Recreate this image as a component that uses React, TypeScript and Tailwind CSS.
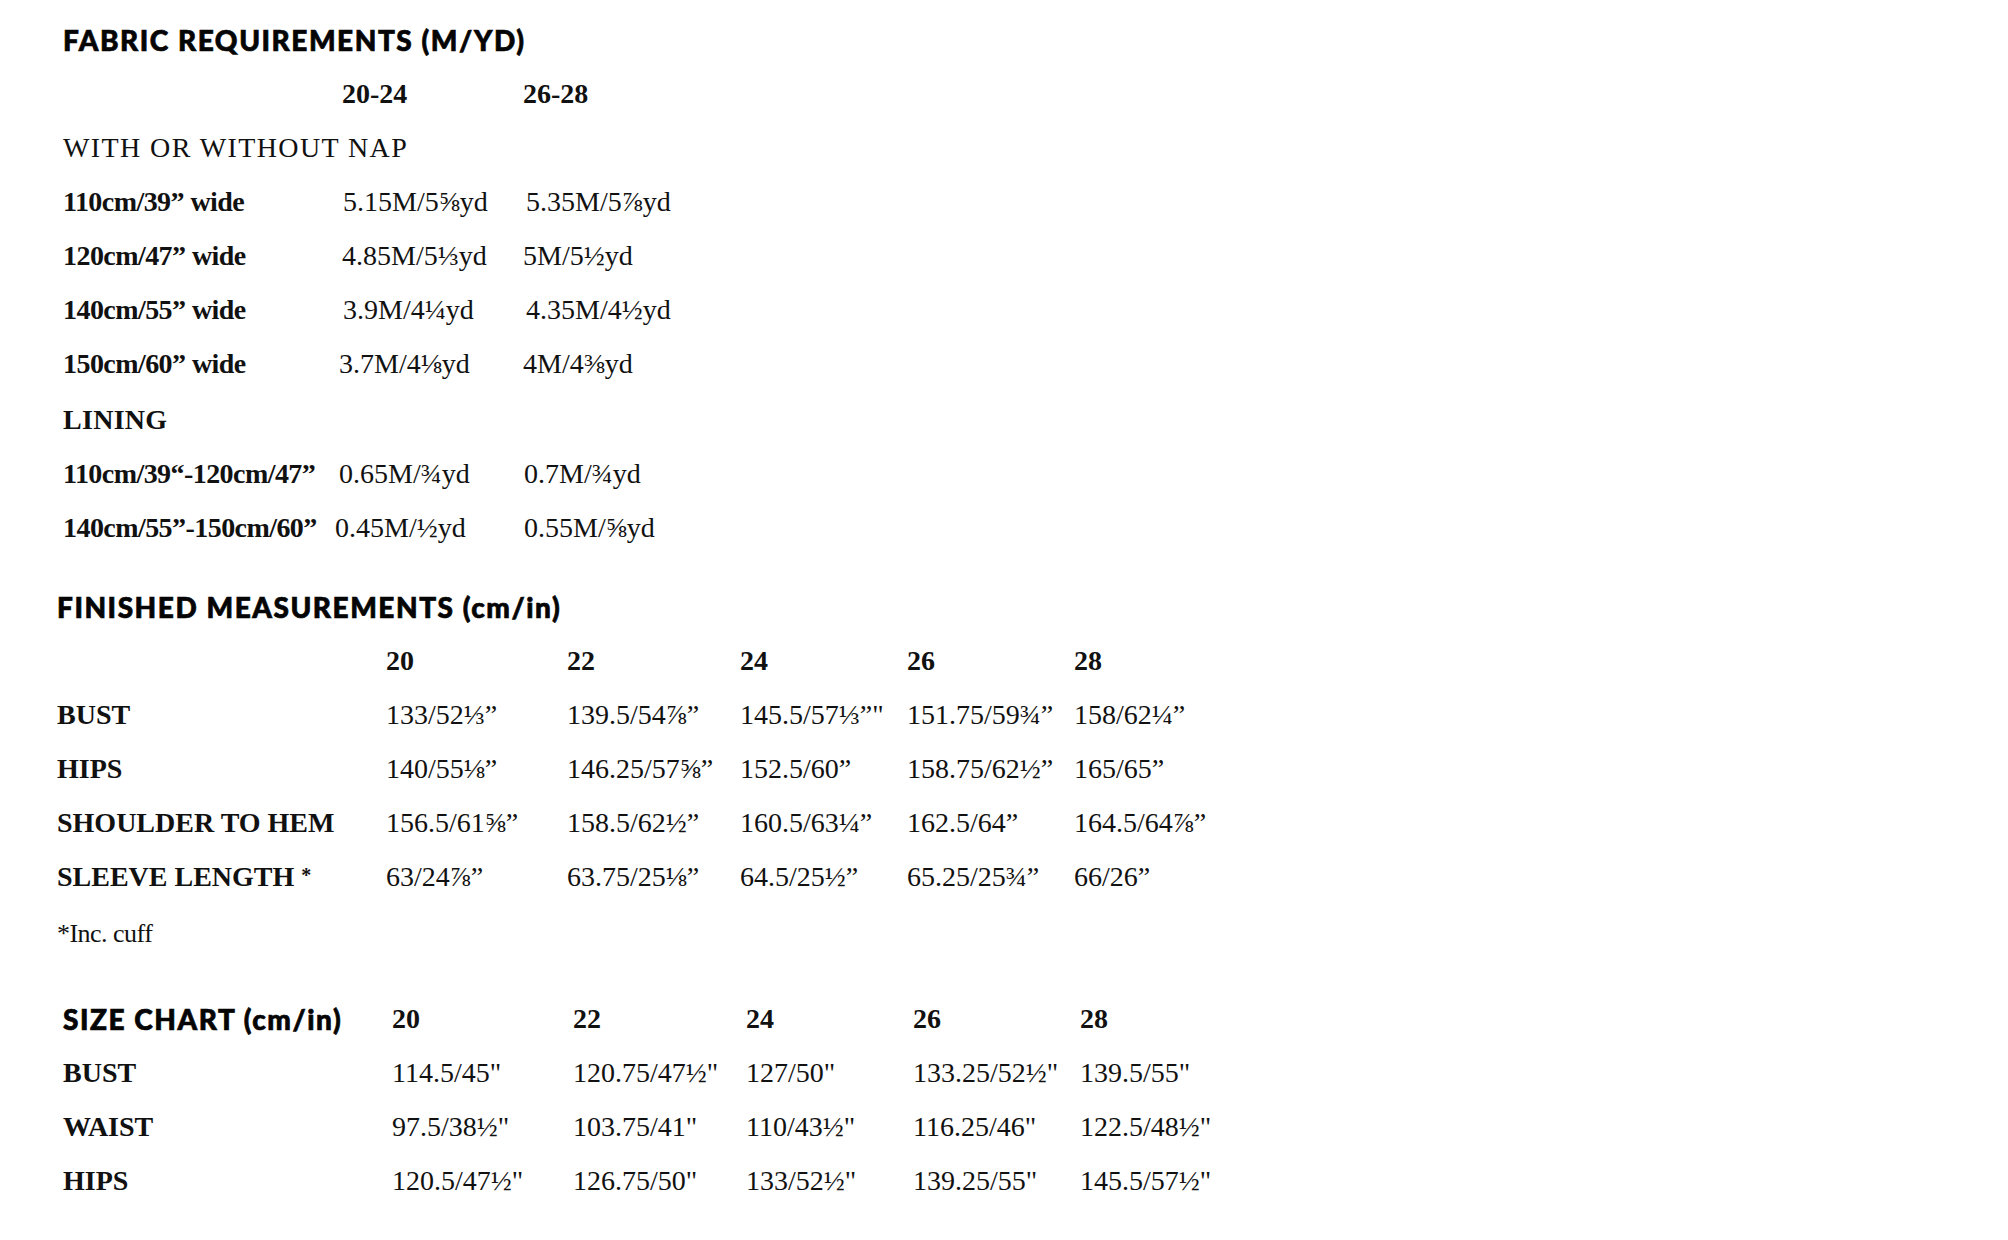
import React from "react";

type Cell = { t: string; c?: string };

const fabricRows: { label: string; v: Cell[] }[] = [
  { label: "110cm/39” wide", v: [{ t: "5.15M/5⅝yd", c: "ml-[1px]" }, { t: "5.35M/5⅞yd", c: "ml-[3px]" }] },
  { label: "120cm/47” wide", v: [{ t: "4.85M/5⅓yd" }, { t: "5M/5½yd" }] },
  { label: "140cm/55” wide", v: [{ t: "3.9M/4¼yd", c: "ml-[1px]" }, { t: "4.35M/4½yd", c: "ml-[3px]" }] },
  { label: "150cm/60” wide", v: [{ t: "3.7M/4⅛yd", c: "-ml-[3px]" }, { t: "4M/4⅜yd" }] },
];

const liningRows: { label: string; v: Cell[] }[] = [
  { label: "110cm/39“-120cm/47”", v: [{ t: "0.65M/¾yd", c: "-ml-[3px]" }, { t: "0.7M/¾yd", c: "ml-[1px]" }] },
  { label: "140cm/55”-150cm/60”", v: [{ t: "0.45M/½yd", c: "-ml-[7px]" }, { t: "0.55M/⅝yd", c: "ml-[1px]" }] },
];

const sizes = ["20", "22", "24", "26", "28"];

const finished: { label: React.ReactNode; v: string[] }[] = [
  { label: "BUST", v: ["133/52⅓”", "139.5/54⅞”", "145.5/57⅓”\"", "151.75/59¾”", "158/62¼”"] },
  { label: "HIPS", v: ["140/55⅛”", "146.25/57⅝”", "152.5/60”", "158.75/62½”", "165/65”"] },
  { label: "SHOULDER TO HEM", v: ["156.5/61⅝”", "158.5/62½”", "160.5/63¼”", "162.5/64”", "164.5/64⅞”"] },
  {
    label: (
      <>
        SLEEVE LENGTH <span className="relative -top-[4px] text-[20px]">*</span>
      </>
    ),
    v: ["63/24⅞”", "63.75/25⅛”", "64.5/25½”", "65.25/25¾”", "66/26”"],
  },
];

const sizeChart: { label: string; v: string[] }[] = [
  { label: "BUST", v: ["114.5/45\"", "120.75/47½\"", "127/50\"", "133.25/52½\"", "139.5/55\""] },
  { label: "WAIST", v: ["97.5/38½\"", "103.75/41\"", "110/43½\"", "116.25/46\"", "122.5/48½\""] },
  { label: "HIPS", v: ["120.5/47½\"", "126.75/50\"", "133/52½\"", "139.25/55\"", "145.5/57½\""] },
];

const headingCls =
  "font-['Lato',sans-serif] font-black text-[28px] tracking-[0.055em] text-[#050505] [-webkit-text-stroke:0.7px_#050505]";

function FabricRow({ label, v }: { label: string; v: Cell[] }) {
  return (
    <div className="flex h-[54px] items-center">
      <div className="w-[279px] shrink-0 font-bold tracking-[-0.02em]">{label}</div>
      <div className="w-[181px] shrink-0">
        <span className={v[0].c}>{v[0].t}</span>
      </div>
      <div>
        <span className={v[1].c}>{v[1].t}</span>
      </div>
    </div>
  );
}

function MeasureRow({ label, v, cols }: { label: React.ReactNode; v: string[]; cols: string[] }) {
  return (
    <div className="flex h-[54px] items-center">
      <div className="w-[329px] shrink-0 font-bold">{label}</div>
      {v.map((t, i) => (
        <div key={i} className={cols[i]}>
          {t}
        </div>
      ))}
    </div>
  );
}

const cols2 = ["w-[181px] shrink-0", "w-[173px] shrink-0", "w-[167px] shrink-0", "w-[167px] shrink-0", "shrink-0"];
const cols3 = ["w-[181px] shrink-0", "w-[173px] shrink-0", "w-[167px] shrink-0", "w-[167px] shrink-0", "shrink-0"];

export default function App() {
  return (
    <div className="min-h-screen w-full bg-white pt-[13px] font-['Liberation_Serif','Times_New_Roman',serif] text-[28px] leading-none text-[#111]">
      {/* FABRIC REQUIREMENTS */}
      <section className="pl-[63px]">
        <div className={"flex h-[54px] items-center " + headingCls}>FABRIC REQUIREMENTS (M/YD)</div>
        <div className="flex h-[54px] items-center font-bold">
          <div className="w-[279px] shrink-0" />
          <div className="w-[181px] shrink-0">20-24</div>
          <div>26-28</div>
        </div>
        <div className="flex h-[54px] items-center tracking-[0.05em]">WITH OR WITHOUT NAP</div>
        {fabricRows.map((r) => (
          <FabricRow key={r.label} label={r.label} v={r.v} />
        ))}
        <div className="mt-[2px] flex h-[54px] items-center font-bold tracking-[0.01em]">LINING</div>
        {liningRows.map((r) => (
          <FabricRow key={r.label} label={r.label} v={r.v} />
        ))}
      </section>

      {/* FINISHED MEASUREMENTS */}
      <section className="mt-[25px] pl-[57px]">
        <div className={"flex h-[54px] items-center " + headingCls}>FINISHED MEASUREMENTS (cm/in)</div>
        <div className="flex h-[54px] items-center font-bold">
          <div className="w-[329px] shrink-0" />
          {sizes.map((s, i) => (
            <div key={s} className={cols2[i]}>
              {s}
            </div>
          ))}
        </div>
        {finished.map((r, i) => (
          <MeasureRow key={i} label={r.label} v={r.v} cols={cols2} />
        ))}
        <div className="mt-[3px] flex h-[54px] items-center text-[26px] tracking-[-0.02em]">*Inc. cuff</div>
      </section>

      {/* SIZE CHART */}
      <section className="mt-[31px] pl-[63px]">
        <div className="flex h-[54px] items-center">
          <div className={"w-[329px] shrink-0 " + headingCls}>SIZE CHART (cm/in)</div>
          {sizes.map((s, i) => (
            <div key={s} className={cols3[i] + " font-bold"}>
              {s}
            </div>
          ))}
        </div>
        {sizeChart.map((r) => (
          <MeasureRow key={r.label} label={r.label} v={r.v} cols={cols3} />
        ))}
      </section>
    </div>
  );
}
